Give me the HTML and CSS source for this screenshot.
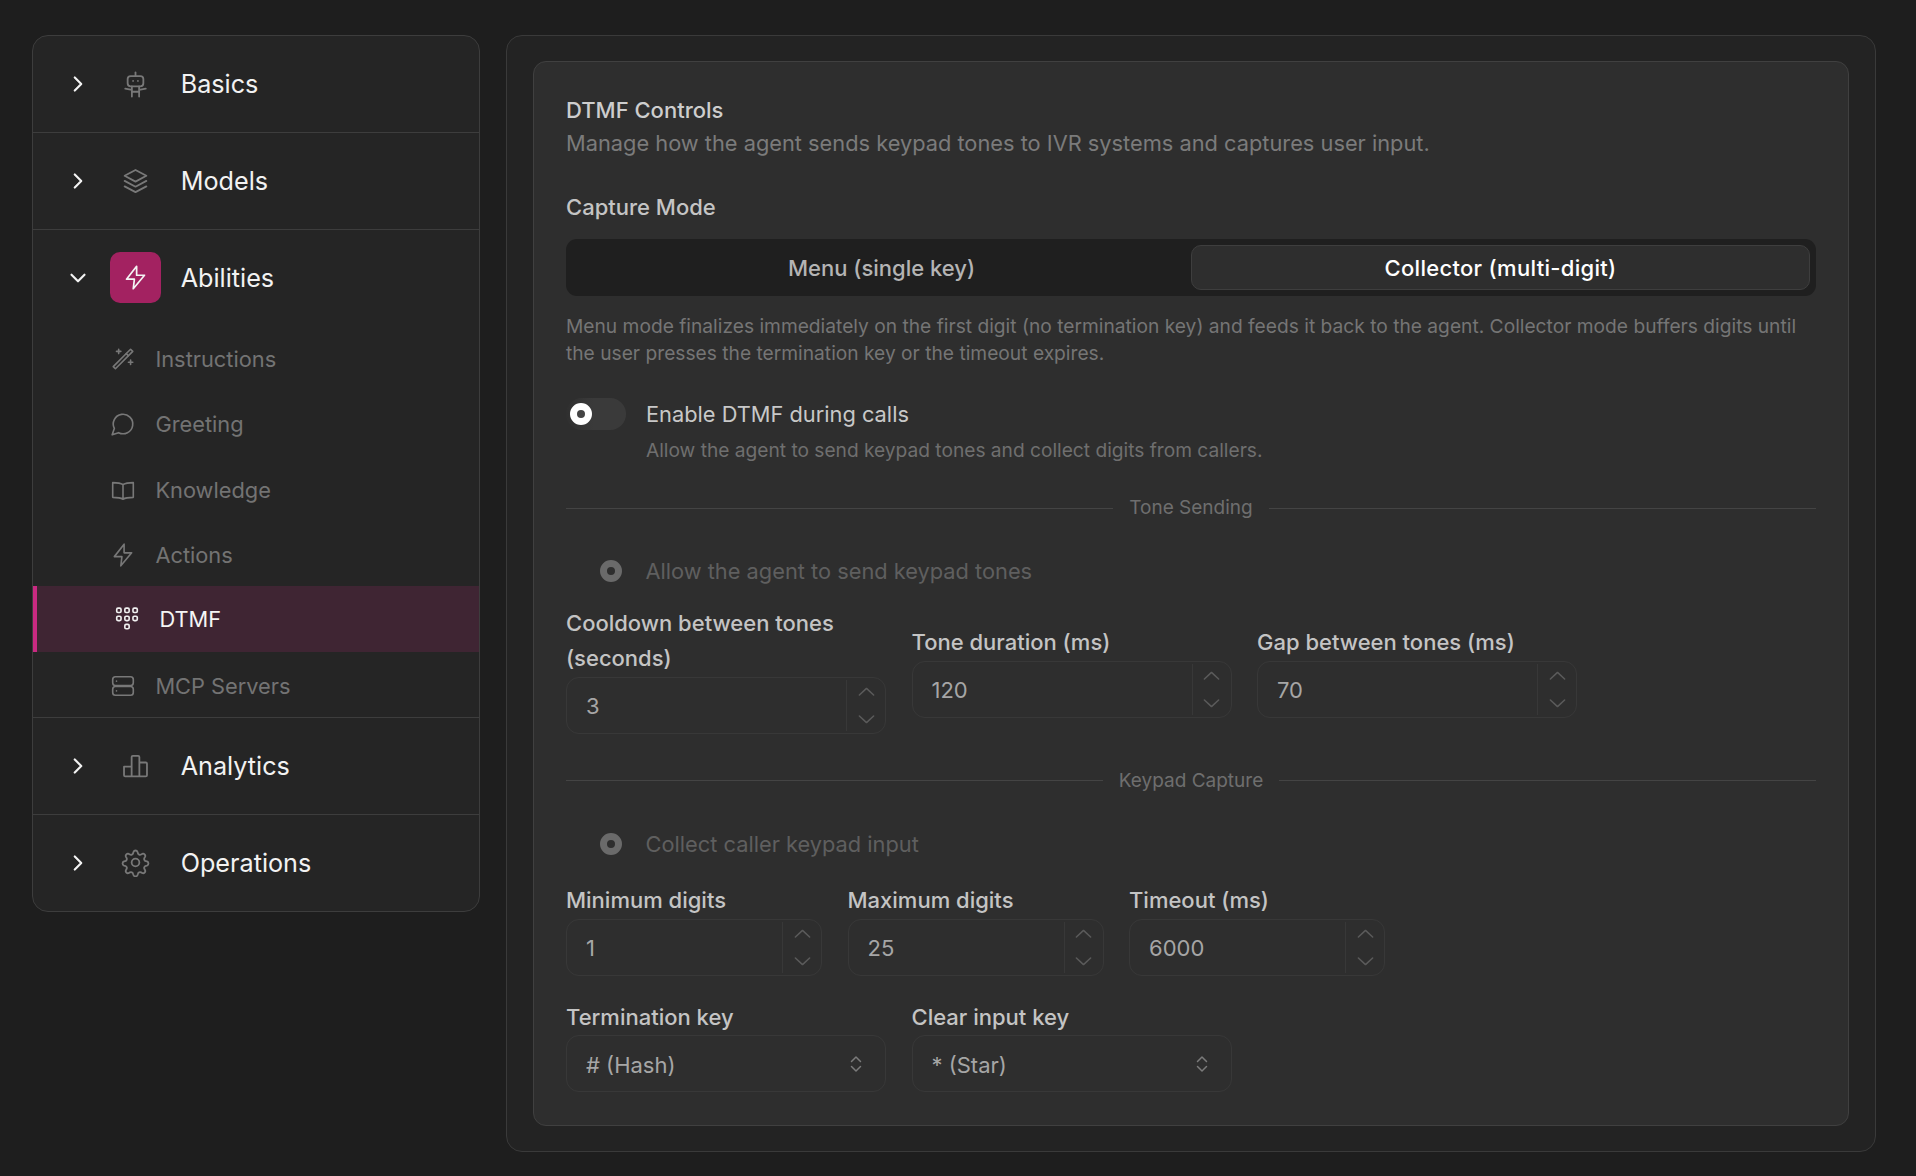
FILE: index.html
```html
<!DOCTYPE html>
<html lang="en">
<head>
<meta charset="utf-8">
<title>DTMF Controls</title>
<link rel="stylesheet" href="styles.css">
</head>
<body>
<svg class="defs" width="0" height="0" aria-hidden="true">
  <symbol id="up" viewBox="0 0 16 16"><path d="M2 10.5 8 5l6 5.500"/></symbol>
  <symbol id="down" viewBox="0 0 16 16"><path d="M2 5.500 8 11l6-5.500"/></symbol>
</svg>
<div class="layout">
  <nav class="sidebar">
    <div class="group">
      <div class="head">
        <svg class="chev" viewBox="0 0 24 24"><path d="m9 6 6 6-6 6"/></svg>
        <span class="tile"><svg class="hicon" viewBox="0 0 24 24"><path d="M12 2v3"/><rect x="5.500" y="5" width="13" height="8.500" rx="2.500"/><path d="M10 9h.01M14 9h.01"/><path d="M9 13.500V22M15 13.500V22M9 18h6M3.500 15.500 9 16.500M20.500 15.500 15 16.500"/></svg></span>
        <span class="htext">Basics</span>
      </div>
    </div>
    <div class="group">
      <div class="head">
        <svg class="chev" viewBox="0 0 24 24"><path d="m9 6 6 6-6 6"/></svg>
        <span class="tile"><svg class="hicon" viewBox="0 0 24 24"><path d="m12 2.500 9 4.800-9 4.800-9-4.800z"/><path d="m3 11.500 9 4.800 9-4.800"/><path d="m3 16 9 4.800 9-4.800"/></svg></span>
        <span class="htext">Models</span>
      </div>
    </div>
    <div class="group">
      <div class="head h3">
        <svg class="chev" viewBox="0 0 24 24"><path d="m6 9 6 6 6-6"/></svg>
        <span class="tile on"><svg class="hicon" viewBox="0 0 24 24"><path d="M13 2 4 13.500h7L10 22l10-12h-7z"/></svg></span>
        <span class="htext">Abilities</span>
      </div>
      <ul class="subs">
        <li class="sub"><svg class="sicon" viewBox="0 0 24 24"><path d="m3 19 2 2L21 5l-2-2z"/><path d="m15 7 2 2"/><path d="M8 3v4M6 5h4M19 13v4M17 15h4"/></svg><span>Instructions</span></li>
        <li class="sub"><svg class="sicon" viewBox="0 0 24 24"><path d="M7.900 20A9 9 0 1 0 4 16.100L2 22Z"/></svg><span>Greeting</span></li>
        <li class="sub"><svg class="sicon" viewBox="0 0 24 24"><path d="M12 7C10 5.800 7 5.200 2.500 5.200v13.600c4.500 0 7.500.4 9.500 1.700 2-1.300 5-1.700 9.500-1.700V5.200C17 5.200 14 5.800 12 7zM12 7v13.500"/></svg><span>Knowledge</span></li>
        <li class="sub"><svg class="sicon" viewBox="0 0 24 24"><path d="M13 2 4 13.500h7L10 22l10-12h-7z"/></svg><span>Actions</span></li>
        <li class="sub active"><svg class="sicon" viewBox="0 0 24 24"><rect x="2.500" y="2" width="4" height="4" rx="1.200"/><rect x="10" y="2" width="4" height="4" rx="1.200"/><rect x="17.500" y="2" width="4" height="4" rx="1.200"/><rect x="2.500" y="9.500" width="4" height="4" rx="1.200"/><rect x="10" y="9.500" width="4" height="4" rx="1.200"/><rect x="17.500" y="9.500" width="4" height="4" rx="1.200"/><rect x="10" y="17" width="4" height="4" rx="1.200"/></svg><span>DTMF</span></li>
        <li class="sub"><svg class="sicon" viewBox="0 0 24 24"><rect x="2.500" y="3.500" width="19" height="8" rx="2.500"/><rect x="2.500" y="12.500" width="19" height="8" rx="2.500"/><path d="M6 7.500h.01M6 16.500h.01"/></svg><span>MCP Servers</span></li>
      </ul>
    </div>
    <div class="group">
      <div class="head">
        <svg class="chev" viewBox="0 0 24 24"><path d="m9 6 6 6-6 6"/></svg>
        <span class="tile"><svg class="hicon" viewBox="0 0 24 24"><path d="M2.500 13h6.300v8H3.500a1 1 0 0 1-1-1zM8.800 5a1 1 0 0 1 1-1h4.400a1 1 0 0 1 1 1v16H8.800zM15.200 9.500h5.300a1 1 0 0 1 1 1V20a1 1 0 0 1-1 1h-5.300z"/></svg></span>
        <span class="htext">Analytics</span>
      </div>
    </div>
    <div class="group">
      <div class="head">
        <svg class="chev" viewBox="0 0 24 24"><path d="m9 6 6 6-6 6"/></svg>
        <span class="tile"><svg class="hicon" viewBox="0 0 24 24"><path d="M10.300 3.300a1.800 1.800 0 0 1 3.400 0l.3 1a1.800 1.800 0 0 0 2.600 1.100l.9-.5a1.800 1.800 0 0 1 2.400 2.400l-.5.9a1.800 1.800 0 0 0 1.100 2.600l1 .3a1.800 1.800 0 0 1 0 3.400l-1 .3a1.800 1.800 0 0 0-1.100 2.600l.5.900a1.800 1.800 0 0 1-2.400 2.400l-.9-.5a1.800 1.800 0 0 0-2.600 1.100l-.3 1a1.800 1.800 0 0 1-3.400 0l-.3-1a1.800 1.800 0 0 0-2.600-1.100l-.9.5a1.800 1.800 0 0 1-2.400-2.400l.5-.9a1.800 1.800 0 0 0-1.100-2.600l-1-.3a1.800 1.800 0 0 1 0-3.400l1-.3a1.800 1.800 0 0 0 1.100-2.600l-.5-.9a1.800 1.800 0 0 1 2.400-2.400l.9.5a1.800 1.800 0 0 0 2.600-1.100z"/><circle cx="12" cy="12" r="3.200"/></svg></span>
        <span class="htext">Operations</span>
      </div>
    </div>
  </nav>

  <main class="panel">
    <section class="card">
      <h1 class="title">DTMF Controls</h1>
      <p class="lead">Manage how the agent sends keypad tones to IVR systems and captures user input.</p>
      <div class="label cap">Capture Mode</div>
      <div class="seg">
        <div class="tab">Menu (single key)</div>
        <div class="tab sel">Collector (multi-digit)</div>
      </div>
      <p class="help">Menu mode finalizes immediately on the first digit (no termination key) and feeds it back to the agent. Collector mode buffers digits until the user presses the termination key or the timeout expires.</p>
      <div class="switchrow">
        <span class="toggle"><span class="knob"></span></span>
        <div>
          <div class="swlabel">Enable DTMF during calls</div>
          <div class="swdesc">Allow the agent to send keypad tones and collect digits from callers.</div>
        </div>
      </div>
      <div class="divider first"><span>Tone Sending</span></div>
      <div class="radiorow r1"><span class="radio"></span><span>Allow the agent to send keypad tones</span></div>
      <div class="fields wide">
        <div class="field"><label class="label">Cooldown between tones (seconds)</label>
          <div class="num"><span class="val">3</span><span class="spin"><svg viewBox="0 0 16 16"><use href="#up"/></svg><svg viewBox="0 0 16 16"><use href="#down"/></svg></span></div></div>
        <div class="field"><label class="label">Tone duration (ms)</label>
          <div class="num"><span class="val">120</span><span class="spin"><svg viewBox="0 0 16 16"><use href="#up"/></svg><svg viewBox="0 0 16 16"><use href="#down"/></svg></span></div></div>
        <div class="field"><label class="label">Gap between tones (ms)</label>
          <div class="num"><span class="val">70</span><span class="spin"><svg viewBox="0 0 16 16"><use href="#up"/></svg><svg viewBox="0 0 16 16"><use href="#down"/></svg></span></div></div>
      </div>
      <div class="divider second"><span>Keypad Capture</span></div>
      <div class="radiorow r2"><span class="radio"></span><span>Collect caller keypad input</span></div>
      <div class="fields narrow">
        <div class="field"><label class="label">Minimum digits</label>
          <div class="num"><span class="val">1</span><span class="spin"><svg viewBox="0 0 16 16"><use href="#up"/></svg><svg viewBox="0 0 16 16"><use href="#down"/></svg></span></div></div>
        <div class="field"><label class="label">Maximum digits</label>
          <div class="num"><span class="val">25</span><span class="spin"><svg viewBox="0 0 16 16"><use href="#up"/></svg><svg viewBox="0 0 16 16"><use href="#down"/></svg></span></div></div>
        <div class="field"><label class="label">Timeout (ms)</label>
          <div class="num"><span class="val">6000</span><span class="spin"><svg viewBox="0 0 16 16"><use href="#up"/></svg><svg viewBox="0 0 16 16"><use href="#down"/></svg></span></div></div>
      </div>
      <div class="fields selects">
        <div class="field"><label class="label">Termination key</label>
          <div class="num"><span class="val">#&nbsp;(Hash)</span><svg class="updown" viewBox="0 0 16 20"><path d="m3.500 7.500 4.500-4.500 4.500 4.500M3.500 12.500l4.500 4.500 4.500-4.500"/></svg></div></div>
        <div class="field"><label class="label">Clear input key</label>
          <div class="num"><span class="val">*&nbsp;(Star)</span><svg class="updown" viewBox="0 0 16 20"><path d="m3.500 7.500 4.500-4.500 4.500 4.500M3.500 12.500l4.500 4.500 4.500-4.500"/></svg></div></div>
      </div>
    </section>
  </main>
</div>
</body>
</html>
```

FILE: styles.css
```css
* { box-sizing: border-box; }
html, body { margin: 0; height: 100%; }
body { background: #1e1e1e; font-family: Inter, "Noto Sans", sans-serif; color: #d0d0d0; overflow: hidden; }
.defs { position: absolute; }
.layout { display: grid; grid-template-columns: 448px 1370px; gap: 26px; padding: 35px 0 0 32px; align-items: start; }

.sidebar { background: #252525; border: 1px solid #3d3d3d; border-radius: 16px; height: 877px; overflow: hidden; }
.group { border-bottom: 1px solid #3d3d3d; }
.group:last-child { border-bottom: 0; }
.head { height: 96px; display: flex; align-items: center; padding-left: 32px; }
.head.h3 { height: 95px; }
.chev { width: 26px; height: 26px; fill: none; stroke: #f2f2f2; stroke-width: 2; stroke-linecap: round; stroke-linejoin: round; flex: none; }
.tile { width: 51px; height: 51px; margin-left: 19px; border-radius: 10px; display: flex; align-items: center; justify-content: center; flex: none; }
.tile.on { background: #a32261; }
.tile.on .hicon { stroke: #f4f4f4; width: 27px; height: 27px; }
.hicon { width: 29px; height: 29px; fill: none; stroke: #787878; stroke-width: 1.5; stroke-linecap: round; stroke-linejoin: round; }
.htext { margin-left: 19.700px; font-size: 25.200px; color: #f2f2f2; }
.subs { list-style: none; margin: 0; padding: 0; }
.sub { height: 65.330px; display: flex; align-items: center; padding: 3px 0 0 77px; color: #737373; font-size: 21.800px; }
.sub.active { background: #3f2533; border-left: 4px solid #c92a82; color: #f5f5f5; padding-top: 0; }
.sicon { width: 26px; height: 26px; fill: none; stroke: #787878; stroke-width: 1.5; stroke-linecap: round; stroke-linejoin: round; margin-right: 19.400px; flex: none; }
.active .sicon { stroke: #f0f0f0; }

.panel { background: #232323; border: 1px solid #3a3a3a; border-radius: 16px; height: 1117px; padding: 25px 26px; }
.card { background: #2e2e2e; border: 1px solid #404040; border-radius: 13px; height: 1065px; padding: 32px; }
.title { margin: 0; font-size: 22px; line-height: 32px; font-weight: 550; color: #cdcdcd; }
.lead { margin: 1px 0 0; font-size: 21.800px; line-height: 32px; color: #7b7b7b; }
.label { display: block; font-size: 22px; line-height: 35px; font-weight: 450; color: #c4c4c4; }
.cap { margin-top: 31px; }
.seg { margin-top: 14px; height: 57px; padding: 6px; background: #1f1f1f; border-radius: 11px; display: grid; grid-template-columns: 1fr 1fr; }
.tab { display: flex; align-items: center; justify-content: center; font-size: 22px; font-weight: 450; color: #b4b4b4; border-radius: 10px; }
.tab.sel { background: #2e2e2e; border: 1px solid #3e3e3e; color: #fff; font-weight: 550; letter-spacing: .3px; }
.help { margin: 17px 0 0; font-size: 19.200px; line-height: 27px; color: #757575; }
.switchrow { display: flex; gap: 20px; margin-top: 31px; }
.toggle { width: 60px; height: 32px; border-radius: 16px; background: linear-gradient(90deg, #2f2f2f, #3a3a3a 45%); padding: 5px 4px; flex: none; }
.knob { display: block; width: 22px; height: 22px; border-radius: 50%; background: #fff; border: 7px solid #fff; }
.knob::after { content: ""; display: block; width: 8px; height: 8px; border-radius: 50%; background: #444; }
.swlabel { font-size: 21.800px; line-height: 32px; color: #c8c8c8; }
.swdesc { margin-top: 6px; font-size: 19.150px; line-height: 28px; color: #6f6f6f; }
.divider { display: flex; align-items: center; gap: 16px; font-size: 19px; line-height: 28px; color: #6e6e6e; }
.divider::before, .divider::after { content: ""; flex: 1; height: 1px; background: #444; }
.first { margin-top: 30px; }
.second { margin-top: 33px; }
.radiorow { display: flex; align-items: center; gap: 23.500px; padding-left: 34px; height: 32px; font-size: 21.800px; color: #5f5f5f; }
.r1 { margin-top: 33px; }
.r2 { margin-top: 33px; }
.radio { width: 22px; height: 22px; border-radius: 50%; border: 7px solid #6a6a6a; background: #2e2e2e; flex: none; }
.fields { display: grid; column-gap: 25.500px; }
.wide { grid-template-columns: repeat(3, 320px); align-items: end; margin-top: 18.500px; }
.wide .field + .field { margin-bottom: 16px; }
.narrow { grid-template-columns: repeat(3, 256px); margin-top: 23.500px; }
.selects { grid-template-columns: repeat(2, 320px); margin-top: 24px; }
.field .label { margin-bottom: 1px; }
.selects .label { margin-bottom: 0; }
.num { height: 57px; border: 1px solid #383838; border-radius: 13px; display: flex; align-items: center; justify-content: space-between; padding-left: 19px; font-size: 22px; color: #a6a6a6; }
.val { padding-top: 1px; }
.selects .val { padding-top: 2px; }
.spin { width: 39px; align-self: stretch; margin: 2px 0; padding: 1px 0; border-left: 1px solid #383838; display: flex; flex-direction: column; align-items: center; justify-content: space-between; }
.spin svg { width: 19px; height: 22px; fill: none; stroke: #5a5a5a; stroke-width: 1.300; stroke-linecap: round; stroke-linejoin: round; }
.updown { width: 16px; height: 20px; margin-right: 21px; fill: none; stroke: #7b7b7b; stroke-width: 1.500; stroke-linecap: round; stroke-linejoin: round; }
```
